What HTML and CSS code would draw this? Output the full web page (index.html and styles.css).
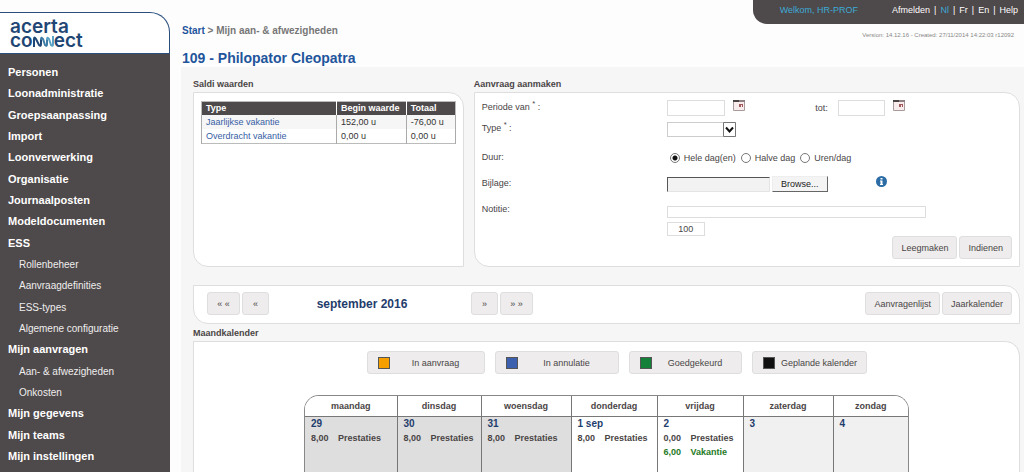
FILE: index.html
```html
<!DOCTYPE html>
<html lang="nl">
<head>
<meta charset="utf-8">
<title>Acerta Connect</title>
<link rel="stylesheet" href="styles.css">
</head>
<body>
<aside class="sidebar">
  <div class="logo">
    <span class="logo-line">acerta</span>
    <span class="logo-line">co<svg class="logo-nn" width="21" height="11" viewBox="0 0 21 11" fill="none" stroke-width="2"><path d="M1 11V3Q1 0 3 3L6 9Q8 11 8 8V3" stroke="#1f4674"/><path d="M8 4Q8 0 10 3L12 9Q14 11 14 8V3" stroke="#3d7ba5"/><path d="M14 4Q14 0 16 3L18 9Q20 11 20 8V0" stroke="#5ba3c6"/></svg>ect</span>
  </div>
  <nav class="menu">
    <a href="#">Personen</a>
    <a href="#">Loonadministratie</a>
    <a href="#">Groepsaanpassing</a>
    <a href="#">Import</a>
    <a href="#">Loonverwerking</a>
    <a href="#">Organisatie</a>
    <a href="#">Journaalposten</a>
    <a href="#">Modeldocumenten</a>
    <a href="#">ESS</a>
    <a href="#" class="sub">Rollenbeheer</a>
    <a href="#" class="sub">Aanvraagdefinities</a>
    <a href="#" class="sub">ESS-types</a>
    <a href="#" class="sub">Algemene configuratie</a>
    <a href="#">Mijn aanvragen</a>
    <a href="#" class="sub">Aan- &amp; afwezigheden</a>
    <a href="#" class="sub">Onkosten</a>
    <a href="#">Mijn gegevens</a>
    <a href="#">Mijn teams</a>
    <a href="#">Mijn instellingen</a>
  </nav>
</aside>
<div class="page">
  <header class="header">
    <div class="heading">
      <div class="crumbs"><a href="#">Start</a> &gt; Mijn aan- &amp; afwezigheden</div>
      <h1>109 - Philopator Cleopatra</h1>
    </div>
    <div class="account">
      <div class="userbar">
        <span class="welcome">Welkom, HR-PROF</span>
        <span class="links"><a href="#">Afmelden</a><span>|</span><a href="#" class="current">Nl</a><span>|</span><a href="#">Fr</a><span>|</span><a href="#">En</a><span>|</span><a href="#">Help</a></span>
      </div>
      <div class="version">Version: 14.12.16 - Created: 27/11/2014 14:22:03 r12092</div>
    </div>
  </header>
  <main class="main">
    <div class="top">
      <section class="block">
        <h2>Saldi waarden</h2>
        <div class="panel balances">
          <table class="saldi">
            <thead><tr><th class="c-type">Type</th><th>Begin waarde</th><th class="c-total">Totaal</th></tr></thead>
            <tbody>
              <tr class="odd"><td><a href="#">Jaarlijkse vakantie</a></td><td>152,00 u</td><td>-76,00 u</td></tr>
              <tr><td><a href="#">Overdracht vakantie</a></td><td>0,00 u</td><td>0,00 u</td></tr>
            </tbody>
          </table>
        </div>
      </section>
      <section class="block">
        <h2>Aanvraag aanmaken</h2>
        <form class="panel request">
          <div class="row">
            <label for="from">Periode van <sup>*</sup> :</label>
            <div class="field">
              <input id="from" type="text" class="date">
              <button type="button" class="cal" aria-label="Kalender"><svg width="12" height="11" viewBox="0 0 12 11"><path d="M.5.5h11v10H.5z" fill="#f8ecec" stroke="#a99b9b"/><path d="M0 0h12v2H0z" fill="#8d7f80"/><path d="M0 0h6v2H0z" fill="#4b4445"/><path d="M6 4h4v3H9V5H8v2H6z" fill="#a1565b"/></svg></button>
              <label for="to" class="to">tot:</label>
              <input id="to" type="text" class="date short">
              <button type="button" class="cal" aria-label="Kalender"><svg width="12" height="11" viewBox="0 0 12 11"><path d="M.5.5h11v10H.5z" fill="#f8ecec" stroke="#a99b9b"/><path d="M0 0h12v2H0z" fill="#8d7f80"/><path d="M0 0h6v2H0z" fill="#4b4445"/><path d="M6 4h4v3H9V5H8v2H6z" fill="#a1565b"/></svg></button>
            </div>
          </div>
          <div class="row type-row">
            <label for="type">Type <sup>*</sup> :</label>
            <div class="field"><span class="select"><select id="type"><option></option></select><svg class="arrow" width="13" height="15" viewBox="0 0 13 15"><path d="M.5.5h12v14H.5z" fill="#fff" stroke="#777"/><path d="M3 5.500l3.500 4 3.500-4" fill="none" stroke="#111" stroke-width="2"/></svg></span></div>
          </div>
          <div class="row duration-row">
            <span>Duur:</span>
            <div class="field radios">
              <label><input type="radio" name="duur" checked>Hele dag(en)</label>
              <label><input type="radio" name="duur">Halve dag</label>
              <label><input type="radio" name="duur">Uren/dag</label>
            </div>
          </div>
          <div class="row file-row">
            <label for="file">Bijlage:</label>
            <div class="field"><input id="file" type="text" class="file"><button type="button" class="browse">Browse...</button>
              <svg class="info" width="11" height="11" viewBox="0 0 11 11"><circle cx="5.500" cy="5.500" r="5.500" fill="#2b6ca5"/><path d="M4.500 2h2v1.500h-2zM4 4.500h2.500V8H7v1H4V8h.5V5.500H4z" fill="#fff"/></svg>
            </div>
          </div>
          <div class="row note-row">
            <label for="note">Notitie:</label>
            <div class="note-fields"><textarea id="note" rows="1"></textarea><input type="text" class="count" value="100" aria-label="Resterende tekens" readonly></div>
          </div>
          <div class="actions"><button type="button" class="btn">Leegmaken</button><button type="button" class="btn">Indienen</button></div>
        </form>
      </section>
    </div>
    <div class="panel monthbar">
      <div class="pair"><button type="button" class="btn nav wide">« «</button><button type="button" class="btn nav">«</button></div>
      <strong class="month">september 2016</strong>
      <div class="pair"><button type="button" class="btn nav">»</button><button type="button" class="btn nav wide">» »</button></div>
      <div class="pair right"><button type="button" class="btn">Aanvragenlijst</button><button type="button" class="btn">Jaarkalender</button></div>
    </div>
    <section class="block month-block">
      <h2>Maandkalender</h2>
      <div class="panel calendar-panel">
        <div class="legend">
          <span class="key"><i class="swatch orange"></i><b>In aanvraag</b></span>
          <span class="key"><i class="swatch blue"></i><b>In annulatie</b></span>
          <span class="key"><i class="swatch green"></i><b>Goedgekeurd</b></span>
          <span class="key"><i class="swatch black"></i><b>Geplande kalender</b></span>
        </div>
        <div class="calendar-frame">
        <table class="calendar">
          <colgroup><col class="w1"><col class="w2"><col class="w3"><col class="w4"><col class="w4"><col class="w3"><col class="w5"></colgroup>
          <thead><tr><th>maandag</th><th>dinsdag</th><th>woensdag</th><th>donderdag</th><th>vrijdag</th><th>zaterdag</th><th>zondag</th></tr></thead>
          <tbody><tr>
            <td class="past"><strong>29</strong><p><span>8,00</span>Prestaties</p></td>
            <td class="past"><strong>30</strong><p><span>8,00</span>Prestaties</p></td>
            <td class="past"><strong>31</strong><p><span>8,00</span>Prestaties</p></td>
            <td><strong>1 sep</strong><p><span>8,00</span>Prestaties</p></td>
            <td><strong>2</strong><p><span>0,00</span>Prestaties</p><p class="leave"><span>6,00</span>Vakantie</p></td>
            <td class="weekend"><strong>3</strong></td>
            <td class="weekend"><strong>4</strong></td>
          </tr></tbody>
        </table>
        </div>
      </div>
    </section>
  </main>
</div>
</body>
</html>
```
FILE: styles.css
```css
* { box-sizing: border-box; }
body {
  margin: 0;
  min-height: 100vh;
  display: flex;
  align-items: stretch;
  background: #fdfdfd;
  color: #4a4546;
  font: 9px/14px "Liberation Sans", Arial, sans-serif;
}
a { color: inherit; text-decoration: none; }
button, input, select, textarea { font: inherit; color: inherit; margin: 0; }

.sidebar {
  width: 170px;
  flex: none;
  display: flex;
  flex-direction: column;
  padding-top: 12px;
}
.logo {
  height: 42px;
  padding: 7px 10px 0;
  border: solid #2a4f7d;
  border-width: 1px 1px 1px 0;
  border-top-right-radius: 20px;
  background: #fff;
  color: #1f4674;
  font: 600 19px/14px Inter, sans-serif;
}
.logo-line { display: block; }
.logo-nn { display: inline-block; }
.menu {
  flex: 1;
  display: flex;
  flex-direction: column;
  justify-content: space-between;
  padding: 8px 8px 5px;
  background: #4e494a;
  color: #fff;
}
.menu a { font-size: 11px; font-weight: bold; line-height: 21px; }
.menu .sub { padding-left: 11px; font-size: 10px; font-weight: normal; color: #eee; }

.page { flex: 1; min-width: 0; display: flex; flex-direction: column; }
.header { display: flex; justify-content: space-between; height: 67px; padding-left: 12px; }
.heading { padding-top: 24px; }
.crumbs { font-size: 10px; font-weight: bold; color: #777; }
.crumbs a, h1 { color: #1f559c; }
h1 { margin: 11px 0 0; font-size: 14px; line-height: 18px; }
.userbar {
  display: flex;
  justify-content: space-between;
  gap: 34px;
  height: 24px;
  padding: 3px 6px 0 27px;
  border-bottom-left-radius: 14px;
  background: #4e494a;
  color: #fff;
}
.links { display: flex; gap: 4px; }
.welcome, .current { color: #3da9d6; }
.version { padding: 4px 10px 0 0; text-align: right; color: #888; font-size: 6px; }

.main {
  flex: 1;
  display: flex;
  flex-direction: column;
  margin-left: 11px;
  padding: 10px 4px 0 12px;
  background: #f6f6f6;
}
h2 { margin: 0; font-size: 9px; line-height: 14px; }
.top { display: grid; grid-template-columns: 271fr 547fr; gap: 10px; }
.block { display: flex; flex-direction: column; }
.panel { border: 1px solid #dedede; background: #fff; border-radius: 0 15px 0 15px; }
.top .panel { height: 175px; margin-top: 1px; }
.balances { padding: 8px 7px; }
.saldi { width: 100%; border-collapse: collapse; line-height: 14px; border: 1px solid #bbb; }
.saldi th { padding: 0 4px; text-align: left; white-space: nowrap; background: #4e494a; color: #fff; line-height: 13px; }
.saldi th + th { border-left: 1px solid #fff; }
.saldi td { padding: 0 4px; border: solid #aaa; border-width: 0 1px; color: #333; }
.saldi a { color: #3760a5; }
.saldi .odd { background: #f6f6f6; }
.c-type { width: 135px; }
.c-total { width: 49px; }

.request { padding: 7px; }
.row { display: grid; grid-template-columns: 185px 1fr; min-height: 16px; }
.field { display: flex; align-items: center; }
sup { line-height: 0; }
.date, .count { width: 58px; height: 16px; border: 1px solid #ddd; background: #fff; }
.date.short { width: 47px; }
.cal { display: flex; align-self: flex-start; margin-left: 8px; padding: 0; border: 0; background: none; }
.to { width: 93px; padding-right: 10px; text-align: right; }
.type-row { margin-top: 5px; }
.select { display: flex; position: relative; }
.select select { width: 69px; height: 15px; padding: 0; appearance: none; border: 1px solid #ccc; background: #fff; }
.arrow { position: absolute; right: 0; top: 0; pointer-events: none; }
.duration-row { margin-top: 13px; }
.radios { gap: 5px; padding-left: 3px; }
.radios label { display: flex; align-items: center; gap: 4px; }
.radios input {
  appearance: none;
  width: 10px;
  height: 10px;
  border: 1px solid #777;
  border-radius: 50%;
  background: #fff;
}
.radios input:checked { background: radial-gradient(circle, #111 0 2px, #fff 3px); }
.file-row { margin-top: 10px; }
.file { width: 103px; height: 15px; border: 1px solid #e4e4e4; border-top-color: #555; border-left-color: #555; background: #f2f2f2; }
.browse { width: 56px; height: 16px; margin-left: 2px; padding: 0; border: 1px solid #eee; border-right-color: #666; border-bottom-color: #666; background: #f4f4f4; color: #222; line-height: 12px; }
.info { align-self: flex-start; margin-left: 48px; }
.note-row { margin-top: 10px; }
.note-fields { display: flex; flex-direction: column; gap: 4px; padding-top: 4px; }
textarea { width: 259px; height: 12px; padding: 0; resize: none; overflow: hidden; border: 1px solid #ddd; }
.count { width: 38px; height: 14px; padding: 0; text-align: center; }
.actions { display: flex; justify-content: flex-end; gap: 2px; }
.btn { height: 23px; padding: 0 8px; border: 1px solid #dedede; border-radius: 3px; background: #eeecec; }

.monthbar { display: flex; align-items: center; height: 39px; margin-top: 18px; padding: 0 7px 2px 13px; }
.pair { display: flex; gap: 2px; }
.right { margin-left: auto; }
.nav { width: 27px; padding: 0; }
.nav.wide { width: 33px; }
.month { width: 202px; padding-right: 16px; text-align: center; color: #1f3d6c; font-size: 12px; }

.month-block { flex: 1; margin-top: 2px; }
.calendar-panel { flex: 1; display: flex; flex-direction: column; margin-top: 1px; padding: 9px 110px 0; border-bottom: 0; border-bottom-left-radius: 0; }
.legend { display: grid; grid-template-columns: 118px 124px 113px 115px; justify-content: center; gap: 10px; padding-left: 20px; }
.key { display: flex; align-items: center; height: 23px; padding: 0 2px 0 10px; border: 1px solid #dedede; border-radius: 3px; background: #eeecec; white-space: nowrap; }
.key b { flex: 1; text-align: center; font-weight: normal; }
.swatch { width: 12px; height: 12px; border: 1px solid #555; }
.orange { background: #f5a000; }
.blue { background: #3c5fae; }
.green { background: #14803a; }
.black { background: #111; }
.calendar-frame { flex: 1; display: flex; margin-top: 21px; overflow: hidden; border: 1px solid #888; border-bottom: 0; border-radius: 15px 15px 0 0; }
.calendar { width: 100%; table-layout: fixed; border-collapse: collapse; }
.w1 { width: 92px; }
.w2 { width: 84px; }
.w3 { width: 90px; }
.w4 { width: 86px; }
.w5 { width: 75px; }
.calendar thead { height: 20px; }
.calendar th { padding: 0; border-bottom: 1px solid #777; background: #fff; }
.calendar th + th, .calendar td + td { border-left: 1px solid #777; }
.calendar td { padding: 0 6px; vertical-align: top; font-weight: bold; line-height: 13px; }
.calendar td strong { color: #1f3d6c; font-size: 10px; }
.calendar p { display: flex; margin: 0; line-height: 14px; }
.calendar p span { width: 27px; }
.past { background: #dedede; }
.weekend { background: #f0f0f0; }
.leave { color: #257a25; }
```
